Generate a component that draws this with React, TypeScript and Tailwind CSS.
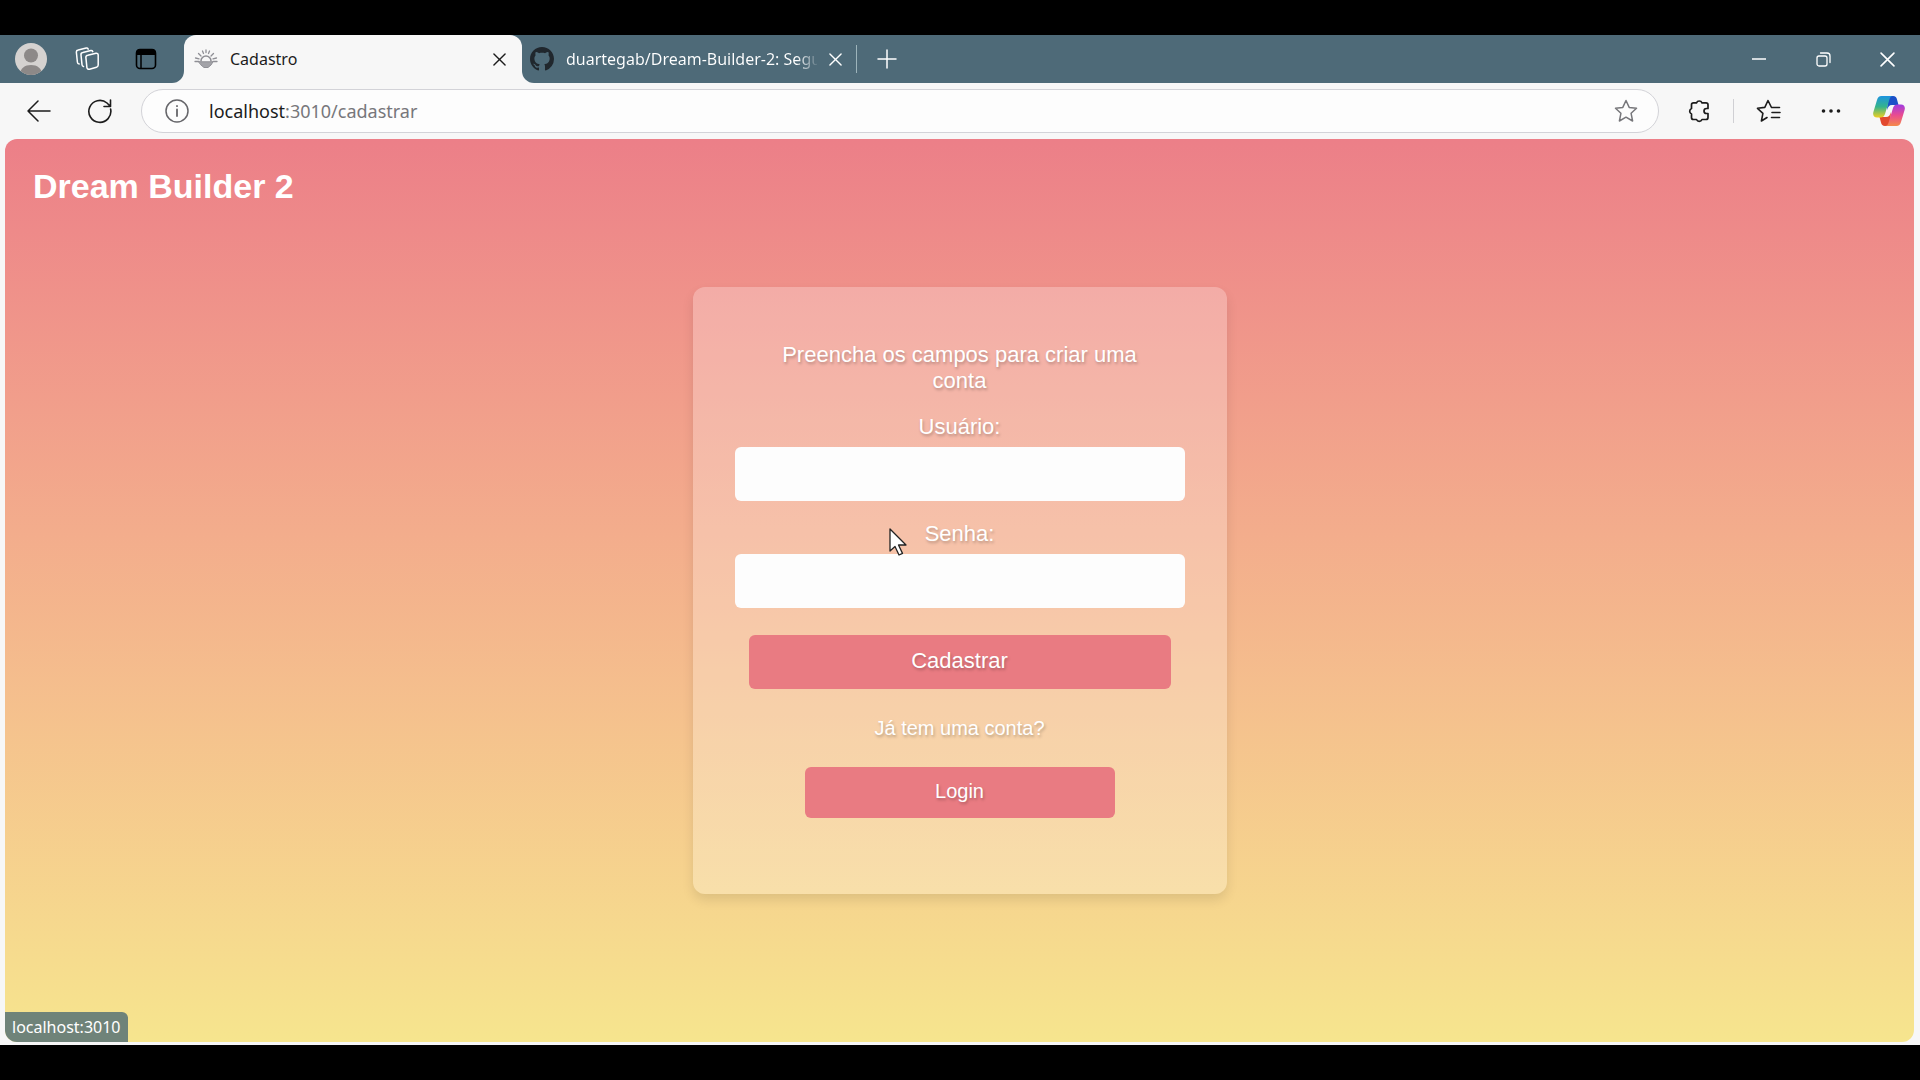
import React from "react";
import type { ReactNode } from "react";

function IconButton({ label, className = "", children }: { label: string; className?: string; children: ReactNode }) {
  return (
    <button type="button" aria-label={label} className={`flex shrink-0 items-center justify-center ${className}`}>
      {children}
    </button>
  );
}

const line = { fill: "none", stroke: "currentColor", strokeLinecap: "round", strokeLinejoin: "round" } as const;

function Avatar() {
  return (
    <svg width="32" height="32" viewBox="0 0 32 32">
      <clipPath id="face"><circle cx="16" cy="16" r="16" /></clipPath>
      <g clipPath="url(#face)">
        <rect width="32" height="32" fill="#d5d2d0" />
        <circle cx="16" cy="12.5" r="7" fill="#8d8988" />
        <path d="M5 32c0-7 5-10 11-10s11 3 11 10z" fill="#8d8988" />
      </g>
    </svg>
  );
}

function Workspaces() {
  return (
    <svg width="24" height="24" viewBox="0 0 24 24" {...line} strokeWidth="1.5">
      <path d="M12.800 8.200 21 6.300a1.800 1.800 0 0 1 2.200 1.700v10a2.200 2.200 0 0 1-1.700 2.200l-7 2a2 2 0 0 1-2.600-1.600l-1-9.900a2.200 2.200 0 0 1 1.900-2.500z" />
      <path d="M8.500 19.500a2 2 0 0 1-1.500-1.800L6 8a2.200 2.200 0 0 1 1.800-2.500l8-1.900a1.800 1.800 0 0 1 2 1" />
      <path d="M4.200 17a2 2 0 0 1-1.800-1.800L1.400 5.500A2.200 2.200 0 0 1 3.200 3l8-1.900a1.800 1.800 0 0 1 2 1" />
    </svg>
  );
}

function VerticalTabs() {
  return (
    <svg width="22" height="22" viewBox="0 0 22 22">
      <rect x="1.500" y="1.500" width="19" height="19" rx="3.500" fill="none" stroke="#000" strokeWidth="1.600" />
      <path d="M1 5a4 4 0 0 1 4-4h12a4 4 0 0 1 4 4v2H1z" fill="#000" />
      <path d="M6 7v13" stroke="#000" strokeWidth="1.500" />
    </svg>
  );
}

function SunIcon() {
  return (
    <svg width="24" height="20" viewBox="0 0 24 20" fill="none" stroke="#8f8f95" strokeWidth="1.300" strokeLinecap="round">
      <path d="M4.500 4.500l2.500 2.500M19.500 4.500l-2.500 2.500M8.500 2l1 2.500M15.500 2l-1 2.500M12 1v2.500M1.500 9l3.500.8M22.500 9l-3.500.8" />
      <path d="M7 12a5 5 0 1 1 10 0" strokeWidth="1.600" />
      <path d="M1 12.500h4M19 12.500h4" />
      <path d="M5 12.800h14l-2 3.200-3 2.500h-4L7 16z" fill="#a3a3a8" strokeWidth="1" />
    </svg>
  );
}

function GithubMark() {
  return (
    <svg width="24" height="24" viewBox="0 0 16 16" fill="#20272d" className="shrink-0">
      <path d="M8 0C3.580 0 0 3.580 0 8c0 3.540 2.290 6.530 5.470 7.590.4.070.55-.17.55-.38 0-.19-.01-.82-.01-1.490-2.010.37-2.530-.49-2.690-.94-.09-.23-.48-.94-.82-1.130-.28-.15-.68-.52-.01-.53.63-.01 1.080.58 1.230.82.72 1.210 1.870.87 2.330.66.07-.52.28-.87.51-1.070-1.780-.2-3.640-.89-3.640-3.950 0-.87.31-1.590.82-2.150-.08-.2-.36-1.020.08-2.120 0 0 .67-.21 2.200.82.64-.18 1.320-.27 2-.27s1.360.09 2 .27c1.530-1.040 2.200-.82 2.200-.82.44 1.100.16 1.920.08 2.120.51.56.82 1.270.82 2.150 0 3.070-1.870 3.750-3.650 3.950.29.25.54.73.54 1.480 0 1.070-.01 1.930-.01 2.200 0 .21.15.46.55.38A8 8 0 0 0 16 8c0-4.420-3.580-8-8-8z" />
    </svg>
  );
}

function Cross({ size }: { size: number }) {
  return (
    <svg width={size} height={size} viewBox="0 0 14 14" {...line} strokeWidth="1.500">
      <path d="M1 1l12 12M13 1 1 13" />
    </svg>
  );
}

function Star() {
  return (
    <svg width="24" height="24" viewBox="0 0 24 24" {...line} strokeWidth="1.500">
      <path d="m12 1.500 3.200 6.900 7.300.9-5.400 5 1.500 7.700L12 18.200 5.400 22l1.500-7.700-5.400-5 7.300-.9z" />
    </svg>
  );
}

function Puzzle() {
  return (
    <svg width="24" height="24" viewBox="0 0 24 24" {...line} strokeWidth="1.700">
      <path d="M9.500 3.800a3 3 0 0 1 5.500 0h4a2 2 0 0 1 2 2V9.500h-1.500a2.500 2.500 0 0 0 0 5H21v4a2 2 0 0 1-2 2h-4a3 3 0 0 1-5.500 0H6.500a2 2 0 0 1-2-2v-3.500a3 3 0 0 1 0-5.500V5.800a2 2 0 0 1 2-2z" />
    </svg>
  );
}

function Favorites() {
  return (
    <svg width="25" height="24" viewBox="0 0 25 24" {...line} strokeWidth="1.600">
      <path d="M15.500 8.500 12 1.500 8.800 8.400 1.500 9.300l5.400 5L5.400 22l5.600-3.500M15.500 8.500H23.500M16 13.500h8M15.500 18.500h8" />
    </svg>
  );
}

function Copilot() {
  return (
    <svg width="32" height="30" viewBox="0 0 32 30">
      <defs>
        <linearGradient id="cool" x1="0" y1="0" x2="0" y2="1">
          <stop offset="0" stopColor="#1d94e0" />
          <stop offset=".5" stopColor="#35b48c" />
          <stop offset="1" stopColor="#f0cf20" />
        </linearGradient>
        <linearGradient id="warm" x1="0" y1="0" x2="0" y2="1">
          <stop offset="0" stopColor="#a03be0" />
          <stop offset=".5" stopColor="#ea4c90" />
          <stop offset="1" stopColor="#f58a4a" />
        </linearGradient>
      </defs>
      <path d="M15 0h5c2.500 0 3.500 1.500 4 3.500L25.500 9H19c-3 0-4 2-5 5z" fill="#1b50c8" />
      <path d="M17 30h-5c-2.500 0-3.500-1.500-4-3.500L6.500 21H13c3 0 4-2 5-5z" fill="#e2492f" />
      <path d="M8.500 0H20c-2 0-3 1.500-3.600 3.500L12 18c-.9 2.500-2 3.500-4.500 3.500H4C1 21.500-.5 19 .4 16L4 4C4.800 1.500 6 0 8.500 0z" fill="url(#cool)" />
      <path d="M23.500 30H12c2 0 3-1.500 3.600-3.500L20 12c.9-2.500 2-3.500 4.500-3.500H28c3 0 4.500 2.500 3.600 5.500L28 26c-.8 2.500-2 4-4.500 4z" fill="url(#warm)" />
    </svg>
  );
}

function TabStrip() {
  return (
    <div className="flex h-12 bg-[#f7f7f7] text-sm">
      <div className="flex w-46 shrink-0 items-center rounded-br-xl bg-[#4e6a78] pl-[15px]">
        <IconButton label="Perfil"><Avatar /></IconButton>
        <IconButton label="Espaços de trabalho" className="ml-7 text-white"><Workspaces /></IconButton>
        <IconButton label="Guias verticais" className="ml-9"><VerticalTabs /></IconButton>
      </div>
      <div className="w-[338px] shrink-0 bg-[#4e6a78]">
        <div className="flex h-full items-center rounded-t-xl bg-[#f7f7f7] pr-4 pl-2.5 text-[#1c1c1c]">
          <SunIcon />
          <span className="ml-3 flex-1 text-base">Cadastro</span>
          <IconButton label="Fechar guia"><Cross size={13} /></IconButton>
        </div>
      </div>
      <div className="flex min-w-0 flex-1 items-center rounded-bl-xl bg-[#4e6a78] pl-2 text-white">
        <GithubMark />
        <span className="ml-3 w-[251px] bg-linear-to-r from-white from-92% to-white/10 bg-clip-text text-base whitespace-nowrap text-transparent">
          duartegab/Dream-Builder-2: Segu
        </span>
        <IconButton label="Fechar guia" className="ml-3"><Cross size={13} /></IconButton>
        <span className="ml-3.5 h-7 w-px bg-[#9db4bb]" />
        <IconButton label="Nova guia" className="ml-5">
          <svg width="20" height="20" viewBox="0 0 20 20" {...line} strokeWidth="1.500"><path d="M10 1v18M1 10h18" /></svg>
        </IconButton>
        <div className="ml-auto flex items-center pr-[25px]">
          <IconButton label="Minimizar" className="w-4">
            <svg width="14" height="2" viewBox="0 0 14 2"><path d="M0 1h14" stroke="currentColor" strokeWidth="1.500" /></svg>
          </IconButton>
          <IconButton label="Restaurar" className="ml-12 w-4">
            <svg width="15" height="15" viewBox="0 0 15 15" {...line} strokeWidth="1.300">
              <rect x="1" y="4" width="10" height="10" rx="2" />
              <path d="M4.500 1H11a3 3 0 0 1 3 3v6.500" />
            </svg>
          </IconButton>
          <IconButton label="Fechar janela" className="ml-12 w-4"><Cross size={15} /></IconButton>
        </div>
      </div>
    </div>
  );
}

function Toolbar() {
  return (
    <div className="flex h-14 items-center bg-[#f7f7f7] pr-[15px] pl-[27px] text-[#1c1c1c]">
      <IconButton label="Voltar">
        <svg width="24" height="22" viewBox="0 0 24 22" {...line} strokeWidth="1.500"><path d="M23 11H1M11 1 1 11l10 10" /></svg>
      </IconButton>
      <IconButton label="Atualizar" className="ml-9">
        <svg width="26" height="26" viewBox="0 0 26 26" {...line} strokeWidth="1.600"><path d="M23.600 11A11 11 0 1 1 20 5l3.500 3.500M23.500 2v6.500H17" /></svg>
      </IconButton>
      <div className="ml-7 flex h-11 min-w-0 flex-1 items-center rounded-full border border-[#d3d3d8] bg-[#fdfdfd] pr-5 pl-[23px]">
        <IconButton label="Informações do site" className="text-[#66666a]">
          <svg width="24" height="24" viewBox="0 0 24 24" {...line} strokeWidth="1.500">
            <circle cx="12" cy="12" r="11" /><path d="M12 10.500v6.500M12 7v.2" strokeWidth="1.800" />
          </svg>
        </IconButton>
        <a href="#cadastrar" className="ml-5 flex-1 text-lg text-[#77777b]">
          <span className="text-[#1c1c1c]">localhost</span>:3010/cadastrar
        </a>
        <IconButton label="Adicionar aos favoritos" className="text-[#77777b]"><Star /></IconButton>
      </div>
      <IconButton label="Extensões" className="ml-7"><Puzzle /></IconButton>
      <span className="ml-[22px] h-6 w-px bg-[#d0d0d4]" />
      <IconButton label="Favoritos" className="ml-[22px]"><Favorites /></IconButton>
      <IconButton label="Configurações e mais" className="ml-10">
        <svg width="20" height="4" viewBox="0 0 20 4" fill="currentColor"><circle cx="2.500" cy="2" r="1.800" /><circle cx="10" cy="2" r="1.800" /><circle cx="17.500" cy="2" r="1.800" /></svg>
      </IconButton>
      <IconButton label="Copilot" className="ml-8"><Copilot /></IconButton>
    </div>
  );
}

function Field({ id, label, type }: { id: string; label: string; type: string }) {
  return (
    <div className="mb-5 flex w-full flex-col items-center">
      <label htmlFor={id} className="mb-[7px] text-[22px] leading-[26px]">{label}</label>
      <input id={id} type={type} className="h-[54px] w-full rounded-md bg-[#fdfdfd] px-3 text-[#333] outline-none" />
    </div>
  );
}

function SignUpCard() {
  return (
    <form className="relative flex w-[534px] flex-col items-center rounded-xl bg-white/25 px-[42px] pt-[55px] pb-[76px] shadow-[0_6px_12px_rgba(0,0,0,0.1)] text-shadow-[1px_2px_3px_rgba(0,0,0,0.25)]">
      <p className="mb-5 w-[400px] text-center text-[22px] leading-[26px]">Preencha os campos para criar uma conta</p>
      <Field id="usuario" label="Usuário:" type="text" />
      <Field id="senha" label="Senha:" type="password" />
      <button type="button" className="mt-[7px] h-[54px] w-[422px] rounded-md bg-[#e97b82] pb-1 text-[22px] text-shadow-[1px_2px_3px_rgba(0,0,0,0.25)]">Cadastrar</button>
      <p className="mt-[27px] text-xl leading-6">Já tem uma conta?</p>
      <button type="button" className="mt-[27px] h-[51px] w-[310px] rounded-md bg-[#e97b82] pb-1 text-xl text-shadow-[1px_2px_3px_rgba(0,0,0,0.25)]">Login</button>
      <svg width="18" height="28" viewBox="0 0 18 28" className="absolute top-[241px] left-[196px]">
        <path d="M1 1v22l5-4.500 4 8.500 3.500-1.600-4-8.400H17z" fill="#fff" stroke="#222" strokeWidth="1.300" strokeLinejoin="round" />
      </svg>
    </form>
  );
}

export default function App() {
  return (
    <div className="flex min-h-screen flex-col bg-black py-[35px] font-['Noto_Sans',sans-serif]">
      <TabStrip />
      <Toolbar />
      <div className="flex flex-1 flex-col bg-[#f7f7f7] pr-1.5 pb-[3px] pl-[5px]">
        <main className="relative flex flex-1 flex-col overflow-hidden rounded-xl bg-linear-to-b from-[#ec7f88] to-[#f6e58e] font-['Liberation_Sans',sans-serif] text-white">
          <h1 className="px-[28px] pt-[27px] pb-px text-[34px] leading-10 font-bold">Dream Builder 2</h1>
          <div className="flex flex-1 justify-center pt-20">
            <div><SignUpCard /></div>
          </div>
          <div className="absolute bottom-0 left-0 rounded-tr-md bg-[#6f8379] px-[7px] py-[3px] font-['Noto_Sans',sans-serif] text-base leading-6">
            localhost:3010
          </div>
        </main>
      </div>
    </div>
  );
}
